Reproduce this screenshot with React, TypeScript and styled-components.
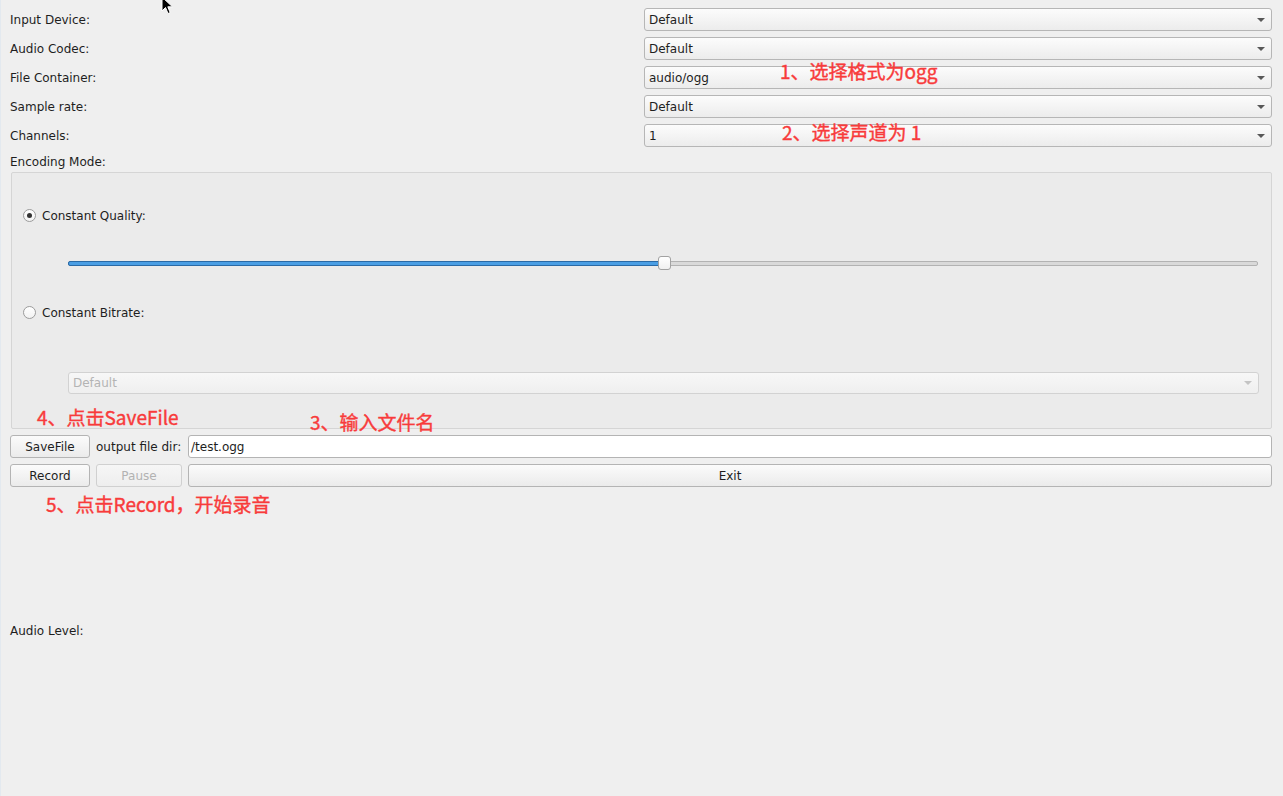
import React, { FC } from 'react';
import styled, { createGlobalStyle } from 'styled-components';

const GlobalStyle = createGlobalStyle`
  html, body {
    margin: 0;
    padding: 0;
    background: #efefef;
  }
  * {
    box-sizing: border-box;
  }
`;

const Window = styled.div`
  position: relative;
  width: 1283px;
  height: 796px;
  overflow: hidden;
  background: #efefef;
  border-left: 1px solid #e3e9ef;
  padding: 8px 11px 0 9px;
  font-family: 'DejaVu Sans', sans-serif;
  font-size: 12px;
  color: #1e1e1e;
`;

const FormGrid = styled.div`
  display: grid;
  grid-template-columns: 634px 1fr;
  grid-auto-rows: 23px;
  row-gap: 6px;
`;

const Label = styled.div`
  padding-top: 1px;
  line-height: 23px;
  white-space: nowrap;
`;

const Combo = styled.div<{ $disabled?: boolean }>`
  display: flex;
  align-items: center;
  justify-content: space-between;
  height: 23px;
  padding: 0 6px 0 4px;
  border: 1px solid ${(p) => (p.$disabled ? '#d2d2d2' : '#b6b6b6')};
  border-radius: 3px;
  background: ${(p) =>
    p.$disabled ? 'linear-gradient(#f7f7f7, #efefef)' : 'linear-gradient(#fcfcfc, #ececec)'};
  color: ${(p) => (p.$disabled ? '#b4b4b4' : '#1e1e1e')};
  &::after {
    content: '';
    border-top: 4px solid ${(p) => (p.$disabled ? '#c4c4c4' : '#585858')};
    border-left: 4px solid transparent;
    border-right: 4px solid transparent;
  }
`;

const SectionLabel = styled(Label)`
  margin-top: 3px;
  height: 22px;
  line-height: 22px;
`;

const GroupBox = styled.div`
  margin-left: 1px;
  height: 257px;
  border: 1px solid #d5d5d5;
  border-radius: 2px;
  background: #ebebeb;
  padding: 0 12px 0 11px;
  display: flex;
  flex-direction: column;
`;

const RadioRow = styled.div<{ $top: number }>`
  display: flex;
  align-items: center;
  gap: 6px;
  height: 23px;
  margin-top: ${(p) => p.$top}px;
`;

const Radio = styled.span<{ $checked?: boolean }>`
  position: relative;
  width: 13px;
  height: 13px;
  border-radius: 50%;
  border: 1px solid #9c9c9c;
  background: linear-gradient(#ffffff, #f2f2f2);
  &::after {
    content: '';
    display: ${(p) => (p.$checked ? 'block' : 'none')};
    position: absolute;
    left: 3px;
    top: 3px;
    width: 5px;
    height: 5px;
    border-radius: 50%;
    background: #333;
  }
`;

const SliderRow = styled.div`
  display: flex;
  align-items: center;
  height: 23px;
  margin: 25px 1px 0 45px;
`;

const Track = styled.div`
  position: relative;
  flex: 1;
  height: 5px;
  border: 1px solid #b2b2b2;
  border-radius: 2px;
  background: #d9d9d9;
`;

const Fill = styled.div<{ $value: number }>`
  position: absolute;
  left: -1px;
  top: -1px;
  bottom: -1px;
  width: ${(p) => p.$value}%;
  border: 1px solid #2a6aa6;
  border-radius: 2px;
  background: #4a9ee4;
`;

const Handle = styled.div<{ $value: number }>`
  position: absolute;
  top: -6px;
  left: calc(${(p) => p.$value}% - 7px);
  width: 13px;
  height: 14px;
  border: 1px solid #a2a2a2;
  border-radius: 3px;
  background: linear-gradient(#ffffff, #f0f0f0);
`;

const BitrateCombo = styled(Combo)`
  margin: 48px 0 0 45px;
  height: 22px;
`;

const ActionGrid = styled.div`
  display: grid;
  grid-template-columns: 80px 86px 1fr;
  grid-auto-rows: 23px;
  column-gap: 6px;
  row-gap: 6px;
  margin-top: 6px;
`;

const Button = styled.div<{ $disabled?: boolean }>`
  display: flex;
  align-items: center;
  justify-content: center;
  border: 1px solid ${(p) => (p.$disabled ? '#d0d0d0' : '#b4b4b4')};
  border-radius: 3px;
  background: ${(p) =>
    p.$disabled ? 'linear-gradient(#f6f6f6, #eeeeee)' : 'linear-gradient(#fbfbfb, #ebebeb)'};
  color: ${(p) => (p.$disabled ? '#b2b2b2' : '#1e1e1e')};
`;

const LineEdit = styled.div`
  display: flex;
  align-items: center;
  padding-left: 2px;
  border: 1px solid #b4b4b4;
  border-radius: 3px;
  background: #ffffff;
`;

const LevelLabel = styled(Label)`
  margin-top: 132px;
`;

const Note = styled.div<{ $x: number; $y: number }>`
  position: absolute;
  left: ${(p) => p.$x}px;
  top: ${(p) => p.$y}px;
  font-family: 'Noto Sans CJK SC', sans-serif;
  font-size: 19px;
  line-height: 20px;
  color: #f83b3b;
  -webkit-text-stroke: 0.4px #f83b3b;
  white-space: nowrap;
`;

const Cursor = styled.svg`
  position: absolute;
  left: 160px;
  top: -4px;
`;

const App: FC = () => {
  const rows: [string, string][] = [
    ['Input Device:', 'Default'],
    ['Audio Codec:', 'Default'],
    ['File Container:', 'audio/ogg'],
    ['Sample rate:', 'Default'],
    ['Channels:', '1'],
  ];

  return (
    <Window>
      <GlobalStyle />
      <FormGrid>
        {rows.map(([label, value]) => (
          <React.Fragment key={label}>
            <Label>{label}</Label>
            <Combo>{value}</Combo>
          </React.Fragment>
        ))}
      </FormGrid>
      <SectionLabel>Encoding Mode:</SectionLabel>
      <GroupBox>
        <RadioRow $top={31}>
          <Radio $checked />
          Constant Quality:
        </RadioRow>
        <SliderRow>
          <Track>
            <Fill $value={50.2} />
            <Handle $value={50.2} />
          </Track>
        </SliderRow>
        <RadioRow $top={26}>
          <Radio />
          Constant Bitrate:
        </RadioRow>
        <BitrateCombo $disabled>Default</BitrateCombo>
      </GroupBox>
      <ActionGrid>
        <Button>SaveFile</Button>
        <Label>output file dir:</Label>
        <LineEdit>/test.ogg</LineEdit>
        <Button>Record</Button>
        <Button $disabled>Pause</Button>
        <Button>Exit</Button>
      </ActionGrid>
      <LevelLabel>Audio Level:</LevelLabel>

      <Note $x={779} $y={61}>1、选择格式为ogg</Note>
      <Note $x={781} $y={122}>2、选择声道为 1</Note>
      <Note $x={36} $y={407}>4、点击SaveFile</Note>
      <Note $x={309} $y={412}>3、输入文件名</Note>
      <Note $x={45} $y={494}>5、点击Record，开始录音</Note>

      <Cursor width="14" height="20" viewBox="0 0 14 20">
        <path d="M1 1 L1 15 L4.5 11.5 L7 17.5 L9.2 16.6 L6.8 10.8 L11.5 10.8 Z" fill="#000" stroke="#fff" strokeWidth="1" />
      </Cursor>
    </Window>
  );
};

export default App;
